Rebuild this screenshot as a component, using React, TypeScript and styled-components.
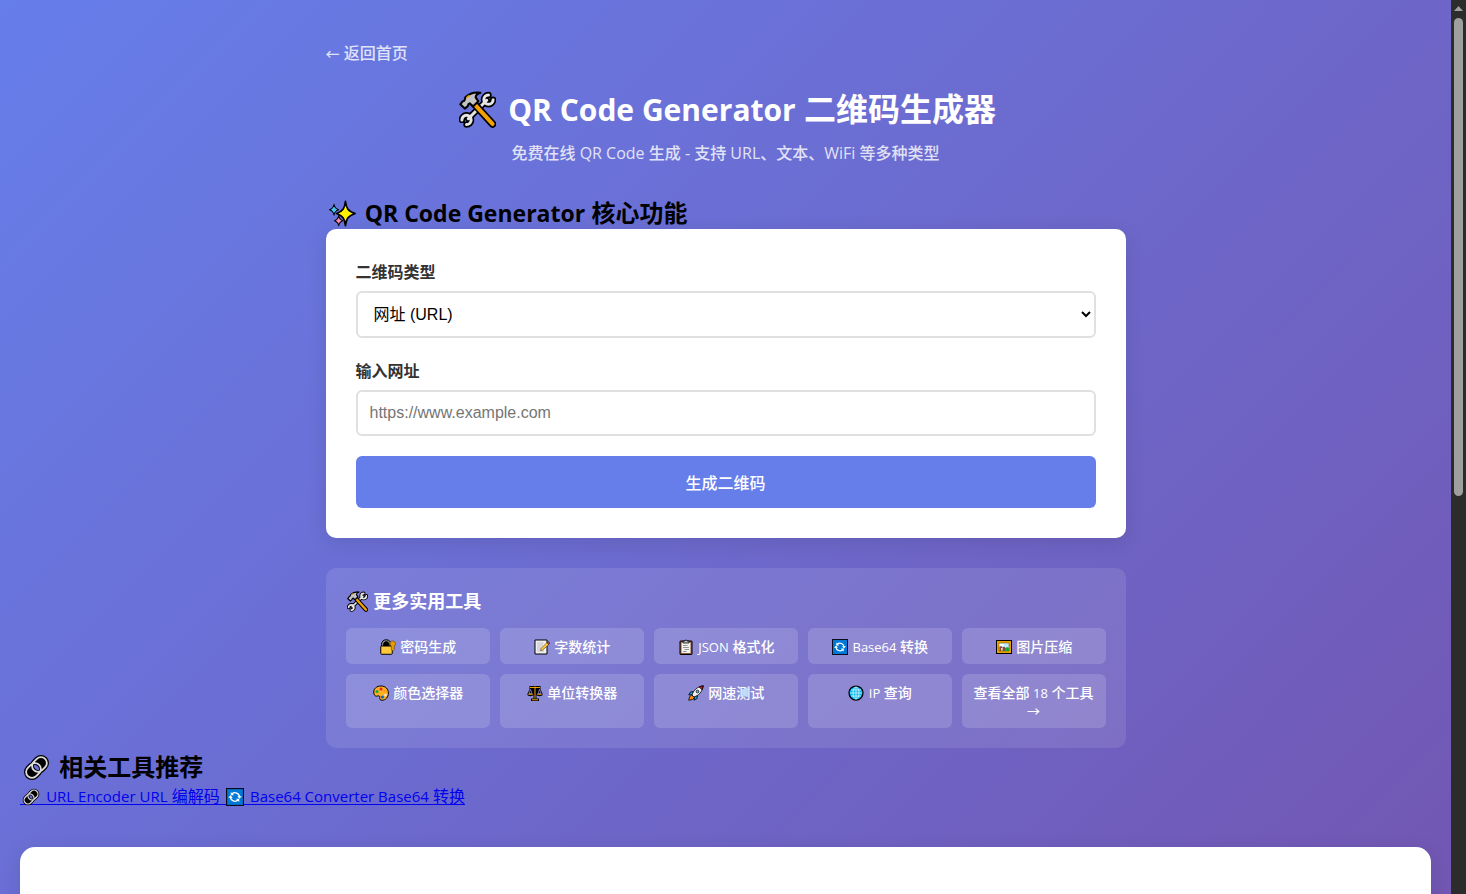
import React from "react";
import styled, { createGlobalStyle } from "styled-components";

const GlobalStyle = createGlobalStyle`
  *, *::before, *::after { margin: 0; padding: 0; box-sizing: border-box; }
  body {
    font-family: "Open Sans", "Noto Sans CJK SC", sans-serif;
    font-size: 16px;
    color: #000;
    overflow: hidden;
  }
`;

const Shell = styled.div`
  display: flex;
  height: 100vh;
  overflow: hidden;
`;

const Viewport = styled.div`
  flex: 1;
  min-width: 0;
  overflow: hidden;
`;

const Page = styled.div`
  display: flex;
  flex-direction: column;
  min-height: 181vh;
  padding: 40px 20px;
  background: linear-gradient(135deg, #667eea 0%, #764ba2 100%);
`;

const Container = styled.main`
  width: 100%;
  max-width: 800px;
  margin: 0 auto;
`;

const Latin = styled.span<{ $size: number }>`
  font-size: ${(p) => p.$size}px;
  line-height: 1;
`;

const BackLink = styled.a`
  display: inline-block;
  line-height: 26px;
  color: #fff;
  opacity: 0.8;
  font-weight: 500;
  text-decoration: none;
  vertical-align: top;
`;

const Header = styled.header`
  margin: 22px 0 31px;
  text-align: center;
  color: #fff;
`;

const Title = styled.h1`
  margin-bottom: 10px;
  font-size: 32px;
  line-height: 42px;
`;

const Subtitle = styled.p`
  line-height: 26px;
  font-weight: 500;
  opacity: 0.8;
`;

const SectionTitle = styled.h2`
  font-size: 24px;
  line-height: 32px;
`;

const Card = styled.form`
  padding: 30px;
  border-radius: 10px;
  background: #fff;
  box-shadow: 0 4px 20px rgba(0, 0, 0, 0.1);
`;

const Field = styled.div`
  margin-bottom: 20px;
`;

const Label = styled.label`
  display: block;
  margin-bottom: 6px;
  line-height: 26px;
  font-weight: 600;
  color: #333;
`;

const controlFont = `"Liberation Sans", "Noto Sans CJK SC", sans-serif`;

const Select = styled.select`
  display: block;
  width: 100%;
  height: 47px;
  padding: 0 12px;
  border: 2px solid #e0e0e0;
  border-radius: 6px;
  background: #fff;
  color: #000;
  font: 16px ${controlFont};
`;

const Input = styled.input`
  display: block;
  width: 100%;
  height: 46px;
  padding: 0 12px;
  border: 2px solid #e0e0e0;
  border-radius: 6px;
  background: #fff;
  font: 16px ${controlFont};
  &::placeholder { color: #757575; }
`;

const SubmitButton = styled.button`
  display: block;
  width: 100%;
  height: 52px;
  border: none;
  border-radius: 6px;
  background: #667eea;
  color: #fff;
  font: 500 16px ${controlFont};
  cursor: pointer;
`;

const ToolsPanel = styled.section`
  margin-top: 30px;
  padding: 20px;
  border-radius: 10px;
  background: rgba(255, 255, 255, 0.1);
  color: #fff;
`;

const ToolsTitle = styled.h3`
  margin-bottom: 14px;
  font-size: 18px;
  line-height: 26px;
`;

const ToolGrid = styled.nav`
  display: grid;
  grid-template-columns: repeat(auto-fit, minmax(140px, 1fr));
  gap: 10px;
`;

const ToolLink = styled.a`
  padding: 10px 10px 8px;
  border-radius: 6px;
  background: rgba(255, 255, 255, 0.15);
  color: #fff;
  font-size: 14px;
  font-weight: 500;
  line-height: 18px;
  text-align: center;
  text-decoration: none;
`;

const Related = styled.section`
  padding-top: 3px;
`;

const RelatedLinks = styled.div`
  line-height: 26px;
`;

const RelatedLink = styled.a`
  color: #0000ee;
  text-decoration: none;
  background: linear-gradient(#0000ee, #0000ee) 0 19px / 100% 1px no-repeat;
`;

const Article = styled.article`
  flex: 1;
  margin-top: 38px;
  border-radius: 15px;
  background: #fff;
  box-shadow: 0 4px 20px rgba(0, 0, 0, 0.1);
`;

const Rail = styled.div`
  display: flex;
  flex-direction: column;
  align-items: center;
  width: 15px;
  background: #2c2c2c;
`;

const RailArrow = styled.svg`
  display: block;
  width: 9px;
  height: 5px;
  margin: 6px 0 7px;
`;

const RailThumb = styled.div`
  width: 9px;
  height: 478px;
  border-radius: 5px;
  background: #9f9f9f;
`;

const Glyph = styled.svg<{ $size: number; $gap: number; $drop: number }>`
  display: inline-block;
  width: ${(p) => p.$size}px;
  height: ${(p) => p.$size}px;
  margin: 0 ${(p) => p.$gap}px -${(p) => p.$drop}px;
  vertical-align: baseline;
`;

const nearLink = "M8.500 9h5a7 7 0 0 1 0 14h-5a7 7 0 0 1 0-14Z";
const farLink = "M18.500 9h5a7 7 0 0 1 0 14h-5a7 7 0 0 1 0-14Z";
const wrench = "M8 24 24 8M25.500 3.500a4 4 0 1 0 4 4M6.500 29a4 4 0 1 0-4-4";

const drawings: Record<string, React.ReactNode> = {
  tools: (
    <g strokeLinejoin="round" strokeLinecap="round">
      <path d={wrench} fill="none" stroke="#000" strokeWidth="5.500" />
      <path d={wrench} fill="none" stroke="#e6e6e6" strokeWidth="2.600" />
      <path d="M13.500 11.500 29 28.500" stroke="#000" strokeWidth="6.500" />
      <path d="M13.500 11.500 29 28.500" stroke="#f2a100" strokeWidth="3.600" />
      <path
        fill="#c4c4c4"
        stroke="#000"
        strokeWidth="1.800"
        d="M5.500 5.500C9 2 14 .8 18.500 1.500c-3 1-4.300 2.400-4 4.300l2.200 3-4.500 4.500-3-2.600c-1 .2-1.400 1-1.600 2.400L5 15.200 1.100 11.500l2-2.600c1.600.2 1.800-.8 2.400-3.400Z"
      />
      <path d="m7 5.500 1.500-1.200" stroke="#f2a100" strokeWidth="1.500" />
    </g>
  ),
  sparkles: (
    <g stroke="#000" strokeLinejoin="round">
      <path strokeWidth="2" fill="#fff100" d="M19.500 1.500c1 8 2.500 11.500 11.500 14.500-9 3-10.500 6.500-11.500 14.500C18.500 22.500 17 19 9 16c8-3 9.500-6.500 10.500-14.500Z" />
      <path strokeWidth="1.200" fill="#40c8f4" d="M6 5c.6 4 1.600 5.300 5.400 6.500C7.600 12.700 6.600 14 6 18c-.6-4-1.600-5.300-5.400-6.500C4.400 10.300 5.400 9 6 5Z" />
      <path strokeWidth="1.200" fill="#ff8fb0" d="M11.500 18.500c.6 3.500 1.500 4.800 5 6-3.500 1.200-4.400 2.500-5 6-.6-3.500-1.500-4.800-5-6 3.500-1.200 4.400-2.500 5-6Z" />
    </g>
  ),
  lock: (
    <g stroke="#000" strokeWidth="2" strokeLinejoin="round">
      <path fill="#8a8a8a" d="M3 15v-4C3 5 7 1.500 12.500 1.500S22 5 22 11v4Z" />
      <path fill="#000" d="M7 14v-3c0-3 2.500-5.500 5.500-5.500S18 8 18 11v3Z" />
      <rect x="1.500" y="14" width="23" height="16.500" rx="1.500" fill="#ffc83d" />
      <path stroke="#4a3200" strokeWidth="1" fill="#e89b00" d="M25 4c4 0 6 2.500 6 5.500 0 2-1 3.500-2.500 4.500v7L25.500 24l-3-3v-7c-1.500-1-2.500-2.500-2.500-4.500C20 6 22 4 25 4Z" />
    </g>
  ),
  memo: (
    <g strokeLinejoin="round">
      <path fill="#f2f2f2" stroke="#000" strokeWidth="2" d="M2 2h24v28H2Z" />
      <path stroke="#999" strokeWidth="1.200" d="M6 8h13M6 12h12M6 16h9M6 20h7M6 24h14" />
      <path fill="#ffc83d" stroke="#4a3a20" strokeWidth="1.200" d="m13 23 1-4L26 7l4 3.500L17.500 22Z" />
      <path fill="#ef6a62" stroke="#000" strokeWidth="1.200" d="m26 7 2-2 4 3.500-2 2Z" />
    </g>
  ),
  clipboard: (
    <g strokeLinejoin="round">
      <rect x="4" y="4" width="24" height="27" rx="1" fill="#8e562e" stroke="#000" strokeWidth="2" />
      <path fill="#f2f2f2" d="M7 7h18v21H7Z" />
      <path fill="#bdbdbd" stroke="#000" strokeWidth="1.500" d="M10 8V4h4c0-3 4-3 4 0h4v4Z" />
      <path stroke="#777" strokeWidth="1.500" d="M10 13h9M10 17h12M13 21h9M10 25h7" />
    </g>
  ),
  refresh: (
    <g>
      <rect x="1" y="1" width="30" height="30" fill="#0078d7" stroke="#0b0b1e" strokeWidth="2" />
      <g fill="none" stroke="#fff" strokeWidth="2.400">
        <path d="M10.500 10.500A8 8 0 0 1 24 16" />
        <path d="M21.500 21.500A8 8 0 0 1 8 16" />
      </g>
      <path fill="#fff" d="M20 14.500h8L24 19ZM12 17.500H4L8 13ZM8.500 7v6h6ZM23.500 25v-6h-6Z" />
    </g>
  ),
  picture: (
    <g>
      <rect x="1" y="3" width="30" height="26" fill="#e8a200" stroke="#000" strokeWidth="2" />
      <path fill="#bfeaff" stroke="#6a4a00" d="M6 8h20v16H6Z" />
      <path fill="#16a832" d="M14 21l8-5 4 2v6H12Z" />
      <path fill="#fff" d="M7 10h9v4H7Z" />
      <path fill="#9c3b2b" d="M7 16l3-2 3 3v7H7Z" />
      <path fill="#f7d7c4" d="M10 18h3v5h-3Z" />
      <path fill="#7a4a3a" d="M14 16h4v7h-4Z" />
    </g>
  ),
  palette: (
    <g>
      <path fill="#ffb01f" stroke="#000" strokeWidth="2" d="M16 2C7 2 1.500 7.500 1.500 14S5 23.500 9 22c3-1 5 0 4.500 3-.6 3.500 1 5.500 4.500 5.500 7.500 0 12.800-6.500 12.800-14C30.800 8 25 2 16 2Z" />
      <circle cx="8" cy="13" r="3" fill="#15a83a" />
      <circle cx="16" cy="8" r="3" fill="#e8232e" />
      <circle cx="24" cy="12" r="2.500" fill="#ff9a20" />
      <circle cx="25" cy="20" r="2.500" fill="#e9e9ff" />
      <circle cx="19" cy="24" r="3" fill="#0063d1" />
    </g>
  ),
  scale: (
    <g strokeLinejoin="round">
      <path fill="#000" d="M5 2h22v7l4 8v3c0 3-11 3-12 0v7h5v5H8v-5h5v-7c-1 3-12 3-12 0v-3l4-8Z" />
      <path fill="none" stroke="#a39af0" strokeWidth="1.400" d="m7 9-3 8h6ZM25 9l-3 8h6Z" />
      <path fill="none" stroke="#f2a100" strokeWidth="2" d="M6 5h20M16 3v24M10 29.500h12M2.500 18.500h9M20.500 18.500h9" />
    </g>
  ),
  rocket: (
    <g stroke="#000" strokeWidth="1.600" strokeLinejoin="round">
      <path fill="#ff8c00" d="m7 20-4 4-1.500 6.500L9 29l4-4Z" />
      <path fill="#00a8e8" d="m11 13-6 1-3.500 6L9 19ZM19 21l-1 6-6 3.500L13 23Z" />
      <path fill="#f0f0f0" d="M8 20C11 11 18 3 30.500 1.500 29 14 21 21 12 24Z" />
      <path fill="#e81224" d="M22.500 4 30.500 1.500 28 9.500Z" />
      <circle cx="19" cy="13" r="2.700" fill="#58c8f4" />
    </g>
  ),
  globe: (
    <g fill="none">
      <circle cx="16" cy="16" r="14" fill="#00b7f0" stroke="#000" strokeWidth="2.500" />
      <g stroke="#e6faff" strokeWidth="1.500">
        <path d="M16 4v24M4 16h24M6 10h20M6 22h20" />
        <ellipse cx="16" cy="16" rx="6" ry="12" />
      </g>
    </g>
  ),
  chain: (
    <g transform="rotate(-45 16 16)">
      <path d={nearLink + farLink} fill="#000" fillRule="evenodd" stroke="#000" strokeWidth="5" />
      <path d={nearLink + farLink} fill="none" stroke="#dcdcdc" strokeWidth="2.200" />
    </g>
  ),
};

function Emoji({ name, size, gap, drop }: { name: string; size: number; gap: number; drop: number }) {
  return (
    <Glyph viewBox="0 0 32 32" aria-hidden="true" $size={size} $gap={gap} $drop={drop}>
      {drawings[name]}
    </Glyph>
  );
}

const tools: { icon?: string; key: string; label: React.ReactNode }[] = [
  { icon: "lock", key: "password", label: "密码生成" },
  { icon: "memo", key: "words", label: "字数统计" },
  { icon: "clipboard", key: "json", label: <><Latin $size={13}>JSON</Latin> 格式化</> },
  { icon: "refresh", key: "base64", label: <><Latin $size={13}>Base64</Latin> 转换</> },
  { icon: "picture", key: "image", label: "图片压缩" },
  { icon: "palette", key: "color", label: "颜色选择器" },
  { icon: "scale", key: "unit", label: "单位转换器" },
  { icon: "rocket", key: "speed", label: "网速测试" },
  { icon: "globe", key: "ip", label: <><Latin $size={13}>IP</Latin> 查询</> },
  { key: "all", label: <>查看全部 <Latin $size={13}>18</Latin> 个工具 <Latin $size={13}>→</Latin></> },
];

export default function App() {
  return (
    <Shell>
      <GlobalStyle />
      <Viewport>
        <Page>
          <Container>
            <BackLink href="#home">
              <Latin $size={14}>←</Latin> 返回首页
            </BackLink>
            <Header>
              <Title>
                <Emoji name="tools" size={37} gap={4} drop={7} /> <Latin $size={30}>QR Code Generator</Latin> 二维码生成器
              </Title>
              <Subtitle>免费在线 QR Code 生成 - 支持 URL、文本、WiFi 等多种类型</Subtitle>
            </Header>
            <SectionTitle>
              <Emoji name="sparkles" size={27} gap={3} drop={5} /> <Latin $size={23}>QR Code Generator</Latin> 核心功能
            </SectionTitle>
            <Card onSubmit={(e) => e.preventDefault()}>
              <Field>
                <Label htmlFor="qr-type">二维码类型</Label>
                <Select id="qr-type">
                  <option>网址 (URL)</option>
                </Select>
              </Field>
              <Field>
                <Label htmlFor="qr-url">输入网址</Label>
                <Input id="qr-url" type="text" placeholder="https://www.example.com" />
              </Field>
              <SubmitButton type="submit">生成二维码</SubmitButton>
            </Card>
            <ToolsPanel>
              <ToolsTitle>
                <Emoji name="tools" size={21} gap={1} drop={4} /> 更多实用工具
              </ToolsTitle>
              <ToolGrid>
                {tools.map((tool) => (
                  <ToolLink key={tool.key} href={`#${tool.key}`}>
                    {tool.icon && <Emoji name={tool.icon} size={16} gap={1} drop={3} />}
                    {tool.icon && " "}
                    {tool.label}
                  </ToolLink>
                ))}
              </ToolGrid>
            </ToolsPanel>
          </Container>
          <Related>
            <SectionTitle>
              <Emoji name="chain" size={27} gap={3} drop={5} /> 相关工具推荐
            </SectionTitle>
            <RelatedLinks>
              <RelatedLink href="#url-encoder">
                <Emoji name="chain" size={18} gap={2} drop={4} /> <Latin $size={15}>URL Encoder URL</Latin> 编解码{" "}
              </RelatedLink>
              <RelatedLink href="#base64">
                <Emoji name="refresh" size={18} gap={2} drop={4} /> <Latin $size={15}>Base64 Converter Base64</Latin> 转换
              </RelatedLink>
            </RelatedLinks>
          </Related>
          <Article />
        </Page>
      </Viewport>
      <Rail aria-hidden="true">
        <RailArrow viewBox="0 0 9 5">
          <path d="M4.500 0 9 5H0Z" fill="#9f9f9f" />
        </RailArrow>
        <RailThumb />
      </Rail>
    </Shell>
  );
}
